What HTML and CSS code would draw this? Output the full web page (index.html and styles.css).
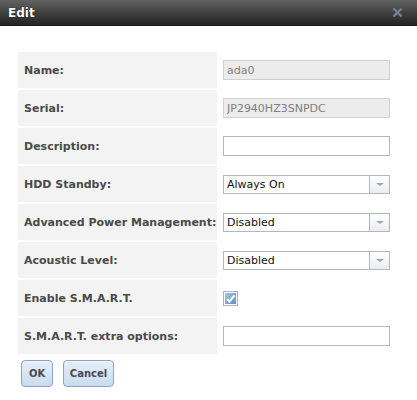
FILE: index.html
```html
<!DOCTYPE html>
<html>
<head>
<meta charset="utf-8">
<link rel="stylesheet" href="styles.css">
</head>
<body>
<div class="dialog">
  <div class="titlebar">
    <span class="title">Edit</span>
    <svg class="close" width="11" height="11" viewBox="0 0 11 11">
      <path d="M1.5 1.5 L9.5 9.5 M9.5 1.5 L1.5 9.5" stroke="#566170" stroke-width="3"/>
      <path d="M1.5 1.5 L9.5 9.5 M9.5 1.5 L1.5 9.5" stroke="#7f8c9c" stroke-width="1.2"/>
    </svg>
  </div>
  <div class="content">
    <table class="form">
      <tr><th>Name:</th><td><input class="text disabled" value="ada0" disabled></td></tr>
      <tr><th>Serial:</th><td><input class="text disabled" value="JP2940HZ3SNPDC" disabled></td></tr>
      <tr><th>Description:</th><td><input class="text" value=""></td></tr>
      <tr><th>HDD Standby:</th><td><div class="select"><span class="val">Always On</span><span class="arrow"></span></div></td></tr>
      <tr><th>Advanced Power Management:</th><td><div class="select"><span class="val">Disabled</span><span class="arrow"></span></div></td></tr>
      <tr><th>Acoustic Level:</th><td><div class="select"><span class="val">Disabled</span><span class="arrow"></span></div></td></tr>
      <tr><th>Enable S.M.A.R.T.</th><td>
        <span class="check"><span class="box"><svg width="11" height="11" viewBox="0 0 11 11"><path d="M2 6 L4.5 8.5 L9.5 2.5" stroke="#fff" stroke-width="2" fill="none"/></svg></span></span>
      </td></tr>
      <tr><th>S.M.A.R.T. extra options:</th><td><input class="text" value=""></td></tr>
    </table>
    <div class="buttons">
      <button class="btn ok">OK</button>
      <button class="btn cancel">Cancel</button>
    </div>
  </div>
</div>
</body>
</html>
```
FILE: styles.css
```css
html, body {
  margin: 0;
  padding: 0;
  background: #fff;
  font-family: "DejaVu Sans", Verdana, sans-serif;
}
.dialog {
  width: 417px;
  height: 400px;
  background: #fff;
}
.titlebar {
  height: 26px;
  background: linear-gradient(#626262, #3a3a3a 60%, #242424);
  display: flex;
  align-items: center;
  justify-content: space-between;
  padding: 0 14px 0 8px;
  box-sizing: border-box;
  border-bottom: 1px solid #1a1a1a;
}
.title {
  color: #fff;
  font-weight: bold;
  font-size: 12px;
  text-shadow: 0 0 1px #000;
}
.close {
  display: block;
}
.content {
  padding: 24px 0 0 16px;
}
.form {
  border-spacing: 2px;
  border-collapse: separate;
}
.form th {
  width: 199px;
  min-width: 199px;
  max-width: 199px;
  height: 36px;
  background: #f3f3f3;
  text-align: left;
  font-size: 11px;
  font-weight: bold;
  color: #4a4a4a;
  padding: 0 0 0 6px;
  box-sizing: border-box;
  vertical-align: middle;
  white-space: nowrap;
}
.form td {
  padding: 0 0 0 4px;
  vertical-align: middle;
}
.text {
  display: block;
  width: 167px;
  height: 20px;
  box-sizing: border-box;
  border: 1px solid #b0b8c6;
  background: #fff;
  font-family: "DejaVu Sans", Verdana, sans-serif;
  font-size: 11px;
  padding: 0 3px;
  margin: 0;
  outline: none;
}
.text.disabled {
  background: #ececec;
  border-color: #cfcfcf;
  color: #808080;
}
.select {
  width: 167px;
  height: 19px;
  box-sizing: border-box;
  border: 1px solid #b0b8c6;
  display: flex;
  background: #fff;
}
.select .val {
  flex: 1;
  font-size: 11px;
  color: #111;
  padding-left: 3px;
  line-height: 17px;
}
.select .arrow {
  width: 19px;
  border-left: 1px solid #b0b8c6;
  background: linear-gradient(#fff, #ececec);
  position: relative;
}
.select .arrow::after {
  content: "";
  position: absolute;
  left: 6px;
  top: 7px;
  border-left: 4px solid transparent;
  border-right: 4px solid transparent;
  border-top: 3px solid #94a6c0;
}
.check {
  display: block;
  width: 15px;
  height: 15px;
  box-sizing: border-box;
  border: 1px solid #a9b6c9;
  padding: 1px;
  background: #fff;
}
.check .box {
  display: block;
  width: 11px;
  height: 11px;
  background: linear-gradient(135deg, #a3c3e4, #5f90c4);
}
.check svg {
  display: block;
}
.buttons {
  display: flex;
  gap: 10px;
  padding: 4px 0 0 5px;
}
.btn {
  height: 27px;
  box-sizing: border-box;
  border: 1px solid #8aa6c6;
  border-radius: 4px;
  background: linear-gradient(#e6eff9, #c9dbef);
  font-family: "DejaVu Sans", Verdana, sans-serif;
  font-size: 10px;
  font-weight: bold;
  color: #4a4a4a;
  padding: 0;
  box-shadow: inset 0 1px 0 #f4f8fc;
}
.btn.ok { width: 32px; }
.btn.cancel { width: 51px; }
```
